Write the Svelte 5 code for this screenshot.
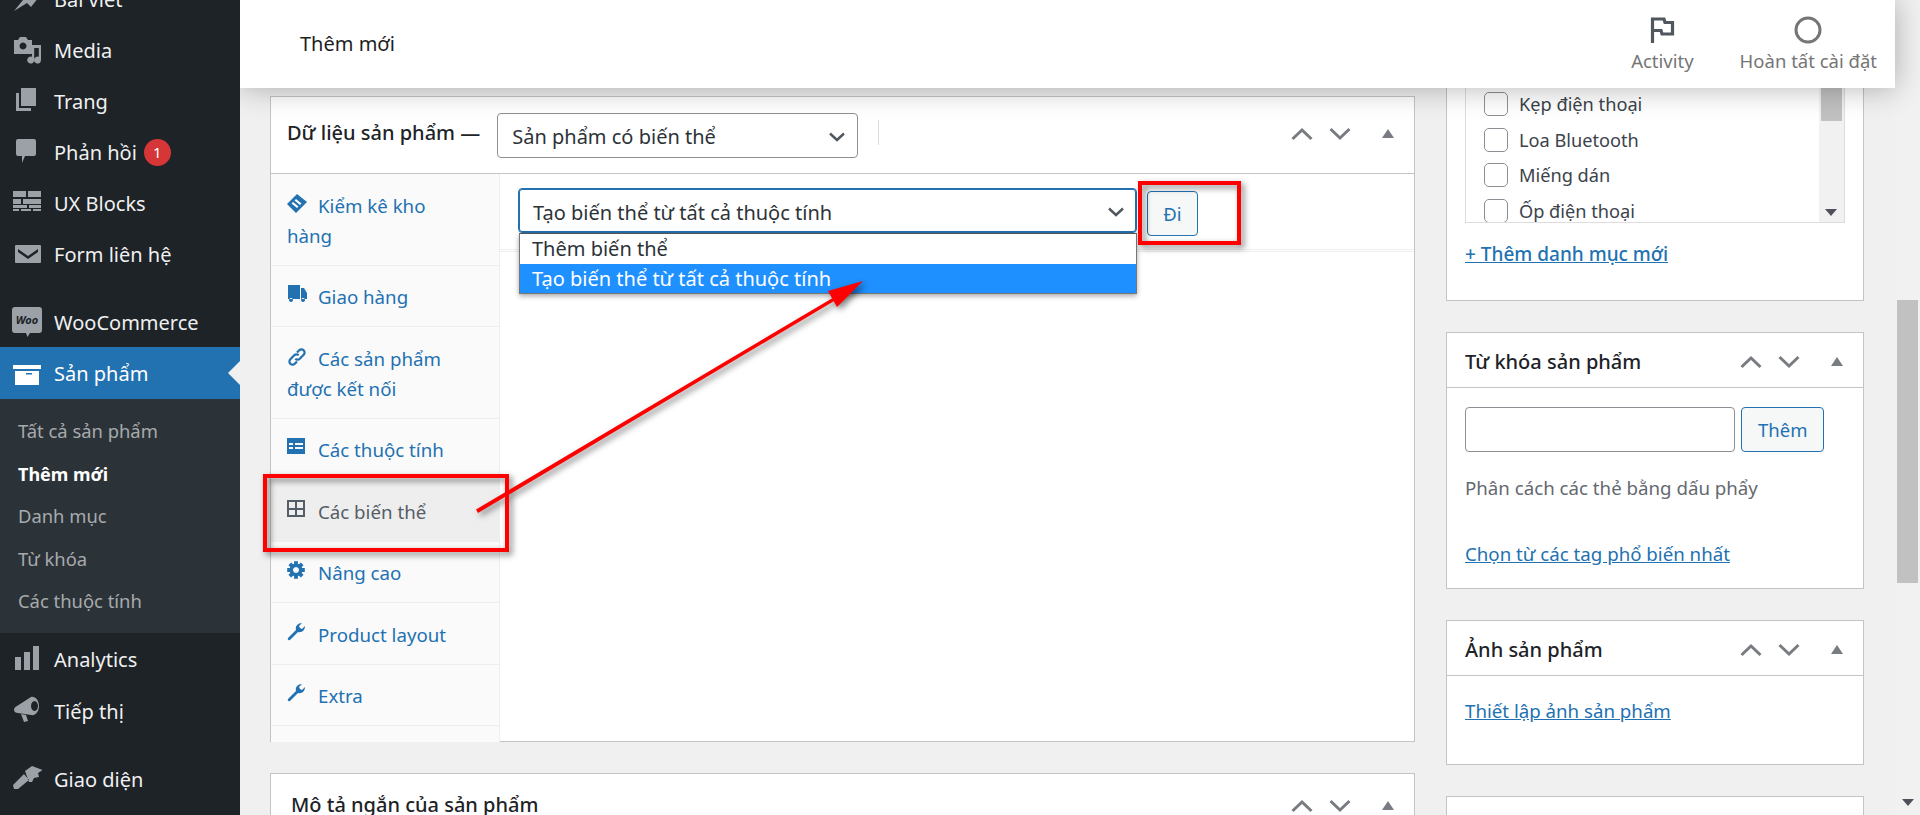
<script>
  // gear outline, 8 teeth, with a hole in the middle
  function gearPath() {
    let d = '';
    for (let i = 0; i < 8; i++) {
      const a = (i * Math.PI) / 4;
      const pts = [[-0.3, 6.4], [-0.22, 9], [0.22, 9], [0.3, 6.4]];
      for (const [o, r] of pts) {
        const x = 9 + r * Math.sin(a + o);
        const y = 9 - r * Math.cos(a + o);
        d += (d ? 'L' : 'M') + x.toFixed(1) + ' ' + y.toFixed(1);
      }
    }
    return d + 'z M9 6a3 3 0 1 0 .01 0z';
  }

  const menuIcons = {
    pin: 'M2 26 11 15 8 12 18 4 27 12 19 22 15 18z',
    media: 'M2 4h4l2-3h6l2 3h4v14H2z M11 6.5a3.5 3.5 0 1 0 .01 0z M20 9h9v15a3.5 3.5 0 1 1-2.2-3.2V12h-4.6v12a3.5 3.5 0 1 1-2.2-3.2z',
    pages: 'M4 6h3v15h12v3H4z M9 1h15v18H9z',
    comment: 'M6 1h16a2 2 0 0 1 2 2v13a2 2 0 0 1-2 2H13l-3 7v-7H6a2 2 0 0 1-2-2V3a2 2 0 0 1 2-2z',
    blocks: 'M1 2h13v6H1z M16 2h13v6H16z M1 10h8v5H1z M11 10h18v5H11z M1 16h14v3H1z M17 16h12v3H17z M1 20h6v2H1z M9 20h10v2H9z M21 20h8v2H21z',
    mail: 'M4 5h24a1 1 0 0 1 1 1v16a1 1 0 0 1-1 1H4a1 1 0 0 1-1-1V6a1 1 0 0 1 1-1z M6 9l10 7 10-7v3L16 19 6 12z',
    archive: 'M1 7h28v4H1z M3 13h24v14H3z M14 15h6v1.5h-6z',
    bars: 'M3 13h6v13H3z M12 8h6v18h-6z M21 2h6v24h-6z',
    megaphone: 'M2 14c0-2 1-3 3-4L19 1c4-1 8 3 8 9s-4 10-8 9L6 17c-2 0-4-1-4-3z M22.500 5a3.500 5 0 1 0 .01 0z M9 18l5 1 2 6-4 1z',
    brush: 'M13 6 20 1 31 5 26 8 27 12 22 13 20 17 17 17z M12 9 17 15 6 24 2 24 1 20z'
  };

  const tabIcons = {
    tag: 'M10 0 20 8 9 19 0 10z M9 5 7.500 6.500 13 11 14.500 9.500z M6 8 4.500 9.500 10 14 11.500 12.500z',
    truck: 'M1 0h12v14H1z M14 3h3l3 5v6h-6z M4 13a2 2 0 1 0 .01 0z M16 13a2 2 0 1 0 .01 0z',
    attrs: 'M0 0h18v16H0z M2 5h4v2H2z M8 5h8v2H8z M2 9h4v2H2z M8 9h8v2H8z',
    grid: 'M0 0h18v17H0z M2 2h6v6H2z M10 2h6v6h-6z M2 10h6v5H2z M10 10h6v5h-6z',
    gear: gearPath(),
    wrench: 'M1 15 9 7C8 3 11 0 15 0L12 3 13 5 15 6 18 3C18 7 15 10 11 9L3 17C2 18 0 16 1 15z'
  };

  const topMenu = [
    { label: 'Bài viết', icon: 'pin' },
    { label: 'Media', icon: 'media' },
    { label: 'Trang', icon: 'pages' },
    { label: 'Phản hồi', icon: 'comment', badge: 1 },
    { label: 'UX Blocks', icon: 'blocks' },
    { label: 'Form liên hệ', icon: 'mail' }
  ];
  const subMenu = ['Tất cả sản phẩm', 'Thêm mới', 'Danh mục', 'Từ khóa', 'Các thuộc tính'];

  const tabs = [
    { label: 'Kiểm kê kho hàng', icon: 'tag' },
    { label: 'Giao hàng', icon: 'truck' },
    { label: 'Các sản phẩm được kết nối', icon: 'link' },
    { label: 'Các thuộc tính', icon: 'attrs' },
    { label: 'Các biến thể', icon: 'grid', active: true },
    { label: 'Nâng cao', icon: 'gear' },
    { label: 'Product layout', icon: 'wrench' },
    { label: 'Extra', icon: 'wrench' }
  ];

  const categories = ['Kẹp điện thoại', 'Loa Bluetooth', 'Miếng dán', 'Ốp điện thoại'];
</script>

{#snippet menuIcon(name)}
  <svg class="mi" viewBox="0 0 30 30" width="30" height="30"><path fill-rule="evenodd" fill="currentColor" d={menuIcons[name]} /></svg>
{/snippet}

{#snippet handles()}
  <div class="handles">
    <svg width="22" height="14" viewBox="0 0 22 14"><path d="M1.500 12 11 3l9.500 9" fill="none" stroke="currentColor" stroke-width="3" /></svg>
    <svg width="22" height="14" viewBox="0 0 22 14"><path d="M1.500 2 11 11l9.500-9" fill="none" stroke="currentColor" stroke-width="3" /></svg>
    <svg class="tri" width="12" height="10" viewBox="0 0 12 10"><path d="M6 0l6 9H0z" fill="currentColor" /></svg>
  </div>
{/snippet}

{#snippet chevron()}
  <svg class="chev" width="16" height="10" viewBox="0 0 16 10"><path d="M1 1.500 8 8l7-6.500" fill="none" stroke="#50575e" stroke-width="2.400" /></svg>
{/snippet}

<div class="page">
  <aside class="sidebar">
    <ul class="menu first">
      {#each topMenu as m}
        <li class="item">
          {@render menuIcon(m.icon)}
          <span>{m.label}</span>
          {#if m.badge}<b class="badge">{m.badge}</b>{/if}
        </li>
      {/each}
    </ul>
    <ul class="menu">
      <li class="item woo">
        <svg class="mi" viewBox="0 0 30 30" width="30" height="30">
          <path fill="currentColor" d="M3 0h24a3 3 0 0 1 3 3v20a3 3 0 0 1-3 3h-9l-2.500 4-1.500-4H3a3 3 0 0 1-3-3V3a3 3 0 0 1 3-3z" />
          <text x="15" y="17" text-anchor="middle" class="woo-text">Woo</text>
        </svg>
        <span>WooCommerce</span>
      </li>
      <li class="item current">
        {@render menuIcon('archive')}
        <span>Sản phẩm</span>
        <i class="notch"></i>
      </li>
    </ul>
    <ul class="submenu">
      {#each subMenu as s, i}
        <li class:on={i === 1}>{s}</li>
      {/each}
    </ul>
    <ul class="menu">
      <li class="item tall">{@render menuIcon('bars')}<span>Analytics</span></li>
      <li class="item tall">{@render menuIcon('megaphone')}<span>Tiếp thị</span></li>
    </ul>
    <ul class="menu last">
      <li class="item">{@render menuIcon('brush')}<span>Giao diện</span></li>
    </ul>
  </aside>

  <div class="main">
    <header class="topbar">
      <h1>Thêm mới</h1>
      <div class="actions">
        <div class="action">
          <svg width="26" height="28" viewBox="0 0 26 28"><path d="M3.500 27V3H15l1 3.500h7.500V18H13l-1-3.500H3.500" fill="none" stroke="#50575e" stroke-width="3.200" /></svg>
          <span>Activity</span>
        </div>
        <div class="action">
          <svg width="28" height="28" viewBox="0 0 28 28"><circle cx="14" cy="14" r="12" fill="none" stroke="#757575" stroke-width="3" /></svg>
          <span>Hoàn tất cài đặt</span>
        </div>
      </div>
    </header>

    <div class="content">
      <div class="col-left">
        <section class="box product">
          <div class="box-head">
            <h2>Dữ liệu sản phẩm —</h2>
            <div class="select type">Sản phẩm có biến thể {@render chevron()}</div>
            <i class="sep"></i>
            {@render handles()}
          </div>
          <div class="product-body">
            <ul class="tabs">
              {#each tabs as t}
                <li class:active={t.active}>
                  {#if t.icon === 'link'}
                    <svg class="ti" width="20" height="20" viewBox="0 0 18 18"><path d="M7.500 10.500a2.800 2.800 0 0 0 4 0l3.500-3.500a2.800 2.800 0 0 0-4-4L9 5M10.500 7.500a2.800 2.800 0 0 0-4 0L3 11a2.800 2.800 0 0 0 4 4l2-2" fill="none" stroke="currentColor" stroke-width="2" /></svg>
                  {:else}
                    <svg class="ti" width="20" height="20" viewBox="0 0 20 20"><path fill-rule="evenodd" fill="currentColor" d={tabIcons[t.icon]} /></svg>
                  {/if}{t.label}
                </li>
              {/each}
            </ul>
            <div class="panel">
              <div class="toolbar">
                <div class="select focused">
                  Tạo biến thể từ tất cả thuộc tính {@render chevron()}
                  <div class="dropdown">
                    <div class="opt">Thêm biến thể</div>
                    <div class="opt picked">Tạo biến thể từ tất cả thuộc tính</div>
                  </div>
                </div>
                <button class="btn go">Đi</button>
              </div>
            </div>
          </div>
        </section>

        <section class="box">
          <div class="box-head short">
            <h2>Mô tả ngắn của sản phẩm</h2>
            {@render handles()}
          </div>
        </section>
      </div>

      <div class="col-right">
        <section class="box cats">
          <div class="cat-list">
            <ul>
              {#each categories as c}
                <li><i class="check"></i>{c}</li>
              {/each}
            </ul>
            <div class="mini-scroll">
              <i class="mini-thumb"></i>
              <svg width="12" height="7" viewBox="0 0 12 7"><path d="M0 0h12L6 7z" fill="#50505a" /></svg>
            </div>
          </div>
          <a class="add-cat" href="#cat">+ Thêm danh mục mới</a>
        </section>

        <section class="box">
          <div class="side-head"><h2>Từ khóa sản phẩm</h2>{@render handles()}</div>
          <div class="side-body tags">
            <div class="tag-row">
              <div class="input"></div>
              <button class="btn">Thêm</button>
            </div>
            <p class="hint">Phân cách các thẻ bằng dấu phẩy</p>
            <a href="#tags">Chọn từ các tag phổ biến nhất</a>
          </div>
        </section>

        <section class="box">
          <div class="side-head"><h2>Ảnh sản phẩm</h2>{@render handles()}</div>
          <div class="side-body image">
            <a href="#img">Thiết lập ảnh sản phẩm</a>
          </div>
        </section>

        <section class="box">
          <div class="side-head"></div>
        </section>
      </div>
    </div>
  </div>

  <div class="scrollbar">
    <i class="thumb"></i>
    <svg width="12" height="7" viewBox="0 0 12 7"><path d="M0 0h12L6 7z" fill="#50505a" /></svg>
  </div>

  <!-- red annotations drawn over the screenshot -->
  <svg class="marks" width="1920" height="815" viewBox="0 0 1920 815">
    <g fill="none" stroke="#ff0000" stroke-width="4">
      <rect x="265" y="476" width="242" height="74" />
      <rect x="1140" y="183" width="99" height="60" />
    </g>
    <path d="M476 509.500 836 296l1.500 3L478 513z" fill="#ff0000" />
    <path d="M863 281 828 291 837 307z" fill="#ff0000" />
  </svg>
</div>

<style>
  :global(body) {
    margin: 0;
    overflow: hidden;
  }
  :global(*) {
    box-sizing: border-box;
  }

  ul {
    list-style: none;
    margin: 0;
    padding: 0;
  }
  h1, h2, p {
    margin: 0;
  }
  a {
    color: #2271b1;
  }

  .page {
    display: flex;
    position: relative;
    width: 1920px;
    height: 815px;
    overflow: hidden;
    background: #f0f0f1;
    font-family: 'Noto Sans', 'Open Sans', sans-serif;
    font-size: 20px;
    color: #3c434a;
  }

  /* sidebar */
  .sidebar {
    position: relative;
    z-index: 3;
    flex: 0 0 240px;
    background: #1d2327;
    color: #f0f0f1;
  }
  .menu.first {
    margin-top: -26px;
    margin-bottom: 17px;
  }
  .menu.last {
    margin-top: 17px;
  }
  .item {
    position: relative;
    display: flex;
    align-items: center;
    height: 51px;
    padding-left: 12px;
  }
  .item.woo {
    height: 50px;
  }
  .item.tall,
  .item.current {
    height: 52px;
  }
  .item span {
    margin-left: 12px;
  }
  .mi {
    flex: none;
    color: #9ca1a7;
  }
  .woo-text {
    font-size: 11px;
    font-weight: 700;
    font-style: italic;
    fill: #1d2327;
  }
  .current {
    background: #2271b1;
    color: #fff;
  }
  .current .mi {
    color: #fff;
  }
  .notch {
    position: absolute;
    right: 0;
    top: 14px;
    border: 12px solid transparent;
    border-left-width: 0;
    border-right-color: #f0f0f1;
  }
  .badge {
    width: 27px;
    height: 27px;
    margin-left: 7px;
    border-radius: 50%;
    background: #d63638;
    color: #fff;
    font-size: 15px;
    font-weight: 400;
    line-height: 27px;
    text-align: center;
  }
  .submenu {
    padding: 11px 0 10.500px 18px;
    background: #2c3338;
    color: #a7aaad;
    font-size: 18.400px;
  }
  .submenu li {
    height: 42.500px;
    line-height: 42px;
  }
  .submenu .on {
    color: #fff;
    font-weight: 700;
    font-size: 18px;
  }

  /* top bar */
  .main {
    flex: 1;
    min-width: 0;
    display: flex;
    flex-direction: column;
  }
  .topbar {
    position: relative;
    z-index: 2;
    flex: 0 0 88px;
    display: flex;
    align-items: center;
    justify-content: space-between;
    padding: 0 18px 0 60px;
    background: #fff;
    box-shadow: 0 0 30px rgba(0, 0, 0, 0.3);
  }
  .topbar h1 {
    padding-bottom: 2px;
    font-size: 20px;
    font-weight: 400;
    color: #1e1e1e;
  }
  .actions {
    display: flex;
    gap: 46px;
  }
  .action {
    display: flex;
    flex-direction: column;
    align-items: center;
    gap: 4px;
    font-size: 18.500px;
    color: #757575;
  }

  /* columns */
  .content {
    flex: 1;
    min-height: 0;
    display: flex;
    gap: 31px;
    padding: 0 31px 0 30px;
  }
  .col-left {
    flex: 0 0 1145px;
    padding-top: 8px;
  }
  .col-right {
    flex: 1;
    min-width: 0;
  }
  .box {
    border: 1px solid #c3c4c7;
    background: #fff;
    margin-bottom: 31px;
  }
  .box-head {
    display: flex;
    align-items: center;
    height: 77px;
    padding: 0 0 6px 16px;
    border-bottom: 1px solid #c3c4c7;
    color: #1d2327;
  }
  .box-head.short {
    border-bottom: 0;
    padding: 0 0 17px 20px;
  }
  .box-head h2,
  .side-head h2 {
    font-size: 20px;
    font-weight: 500;
    color: #1d2327;
  }
  .handles {
    display: flex;
    align-items: center;
    gap: 16px;
    margin: 4px 0 0 auto;
    padding-right: 20px;
    color: #787c82;
  }
  .tri {
    margin-left: 15px;
  }

  .select {
    position: relative;
    display: flex;
    align-items: center;
    justify-content: space-between;
    height: 45px;
    padding: 3px 12px 0 14px;
    border: 1px solid #8c8f94;
    border-radius: 4px;
    background: #fff;
    color: #2c3338;
  }
  .select.type {
    width: 361px;
    margin: 6px 0 0 17px;
  }
  .sep {
    width: 1px;
    height: 25px;
    margin-left: 20px;
    background: #ddd;
  }

  .product {
    height: 646px;
  }
  .product-body {
    display: flex;
    height: 568px;
  }
  .tabs {
    flex: 0 0 229px;
    background: #fafafa;
    border-right: 1px solid #eee;
    color: #2271b1;
    font-size: 18.700px;
    line-height: 30px;
  }
  .tabs li {
    padding: 16.500px 30px 14px 16px;
    border-bottom: 1px solid #eee;
  }
  .tabs li.active {
    background: #eee;
    color: #555d66;
  }
  .ti {
    vertical-align: -1px;
    margin-right: 11px;
  }
  .panel {
    flex: 1;
  }
  .toolbar {
    display: flex;
    align-items: flex-start;
    gap: 10px;
    height: 78px;
    padding: 14px 0 0 18px;
    border-bottom: 3px double #eee;
  }
  .select.focused {
    width: 619px;
    border-color: #2271b1;
    box-shadow: inset 0 0 0 1px #2271b1;
  }
  .dropdown {
    position: absolute;
    left: 0;
    right: -1px;
    top: 44px;
    z-index: 1;
    border: 1px solid #767676;
    border-top-color: #555;
    background: #fff;
    box-shadow: 0 2px 5px rgba(0, 0, 0, 0.35);
  }
  .opt {
    height: 29.500px;
    padding-left: 12px;
    line-height: 30px;
  }
  .opt.picked {
    background: #1e90ff;
    color: #fff;
  }
  .btn {
    height: 45px;
    padding: 0 16px;
    border: 1px solid #2271b1;
    border-radius: 4px;
    background: #f6f7f7;
    color: #2271b1;
    font: inherit;
    font-size: 18.500px;
  }
  .btn.go {
    width: 51px;
    margin-top: 3px;
    padding: 0;
  }

  /* right column */
  .cats {
    height: 213px;
    padding: 0 18px;
    border-top: 0;
  }
  .cat-list {
    display: flex;
    justify-content: space-between;
    height: 135px;
    border: 1px solid #ddd;
    border-top: 0;
    overflow: hidden;
    font-size: 18.200px;
  }
  .cat-list ul {
    margin-top: -1.500px;
    padding-left: 18px;
  }
  .cat-list li {
    display: flex;
    align-items: center;
    gap: 11px;
    height: 35.500px;
  }
  .check {
    width: 24px;
    height: 24px;
    border: 1px solid #8c8f94;
    border-radius: 5px;
    background: #fff;
  }
  .mini-scroll {
    position: relative;
    flex: 0 0 25px;
    padding: 0 2px;
    background: #f1f1f1;
  }
  .mini-thumb {
    display: block;
    height: 33px;
    background: #c1c1c1;
  }
  .mini-scroll svg {
    position: absolute;
    left: 6px;
    bottom: 6px;
  }
  .add-cat {
    display: block;
    margin-top: 18px;
    font-weight: 500;
    font-size: 19px;
  }
  .side-head {
    display: flex;
    align-items: center;
    height: 55px;
    padding-left: 18px;
    border-bottom: 1px solid #c3c4c7;
  }
  .side-head h2 {
    padding-top: 3px;
  }
  .side-body {
    padding: 19px 18px 0;
    font-size: 18.700px;
  }
  .tags {
    height: 200px;
  }
  .tag-row {
    display: flex;
    gap: 6px;
  }
  .input {
    width: 270px;
    height: 45px;
    border: 1px solid #8c8f94;
    border-radius: 4px;
  }
  .hint {
    margin: 23px 0 41px;
    color: #646970;
  }
  .image {
    height: 88px;
    padding-top: 22px;
  }

  /* scrollbar */
  .scrollbar {
    position: relative;
    flex: 0 0 25px;
    padding: 300px 2px 0;
    background: #f1f1f1;
  }
  .thumb {
    display: block;
    height: 283px;
    background: #c1c1c1;
  }
  .scrollbar svg {
    position: absolute;
    left: 7px;
    bottom: 9px;
  }

  .marks {
    position: absolute;
    left: 0;
    top: 0;
    z-index: 5;
    pointer-events: none;
    filter: drop-shadow(3px 3px 3px rgba(0, 0, 0, 0.5));
  }
</style>
